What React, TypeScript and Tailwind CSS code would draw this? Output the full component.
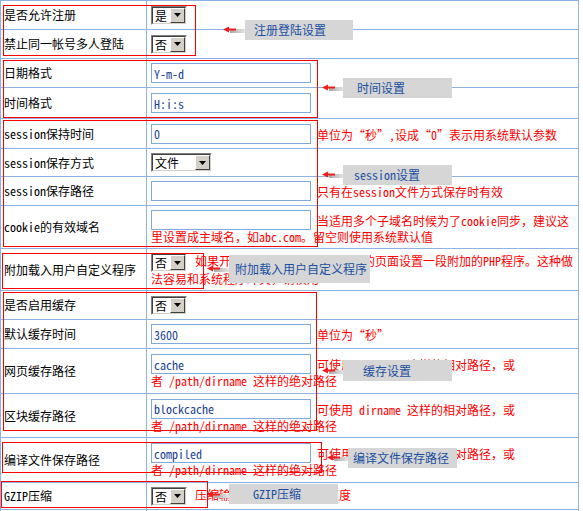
import React from 'react';

// 宋体-like metrics: CJK 12px, latin 6px
const font = "font-[family-name:'Noto_Sans_Mono_CJK_SC','Noto_Sans_CJK_SC',sans-serif]";

const Combo: React.FC<{ text: string; wide?: boolean }> = ({ text, wide }) => (
  <span
    className={`mr-[2px] inline-flex h-[19px] align-middle border border-t-[#808080] border-l-[#808080] border-r-[#ffffff] border-b-[#ffffff] ${
      wide ? 'w-[61px]' : 'w-[36px]'
    }`}
  >
    <span className="flex flex-1 border border-t-[#404040] border-l-[#404040] border-r-[#d4d0c8] border-b-[#d4d0c8] bg-white">
      <span className="flex-1 pl-[2px] leading-[15px] text-black">{text}</span>
      <span className="flex w-[15px] items-center justify-center border border-t-[#ffffff] border-l-[#ffffff] border-r-[#404040] border-b-[#404040] bg-[#d4d0c8]">
        <svg width="7" height="4" viewBox="0 0 7 4">
          <path d="M0 0h7L3.5 4z" fill="#000" />
        </svg>
      </span>
    </span>
  </span>
);

const Field: React.FC<{ value?: string }> = ({ value = '' }) => (
  <input
    readOnly
    value={value}
    className="h-[20px] w-[160px] border border-[#82a9db] bg-white px-[2px] align-baseline text-[#1c3f94] outline-none"
  />
);

const Note: React.FC<{ children: React.ReactNode }> = ({ children }) => (
  <span className="text-[#ff0000]">{children}</span>
);

const pathNote = (
  <Note>
    可使用 dirname 这样的相对路径，或<span className="whitespace-nowrap">者 /path/dirname</span> 这样的绝对路径
  </Note>
);

const rows: { label: string; h: string; value: React.ReactNode }[] = [
  { label: '是否允许注册', h: 'h-[29px]', value: <Combo text="是" /> },
  { label: '禁止同一帐号多人登陆', h: 'h-[29px]', value: <Combo text="否" /> },
  { label: '日期格式', h: 'h-[29px]', value: <Field value="Y-m-d" /> },
  { label: '时间格式', h: 'h-[31px]', value: <Field value="H:i:s" /> },
  {
    label: 'session保持时间',
    h: 'h-[30px]',
    value: (
      <>
        <Field value="0" /> <Note>单位为“秒”,设成“0”表示用系统默认参数</Note>
      </>
    ),
  },
  { label: 'session保存方式', h: 'h-[28px]', value: <Combo text="文件" wide /> },
  {
    label: 'session保存路径',
    h: 'h-[29px]',
    value: (
      <>
        <Field /> <Note>只有在session文件方式保存时有效</Note>
      </>
    ),
  },
  {
    label: 'cookie的有效域名',
    h: 'h-[43px]',
    value: (
      <>
        <Field /> <Note>当适用多个子域名时候为了cookie同步，建议这里设置成主域名，如abc.com。留空则使用系统默认值</Note>
      </>
    ),
  },
  {
    label: '附加载入用户自定义程序',
    h: 'h-[42px]',
    value: (
      <>
        <Combo text="否" /> <Note>如果开启此功能，您可以在所有的页面设置一段附加的PHP程序。这种做法容易和系统程序冲突，请慎用</Note>
      </>
    ),
  },
  { label: '是否启用缓存', h: 'h-[29px]', value: <Combo text="否" /> },
  {
    label: '默认缓存时间',
    h: 'h-[29px]',
    value: (
      <>
        <Field value="3600" /> <Note>单位为“秒”</Note>
      </>
    ),
  },
  {
    label: '网页缓存路径',
    h: 'h-[45px]',
    value: (
      <>
        <Field value="cache" /> {pathNote}
      </>
    ),
  },
  {
    label: '区块缓存路径',
    h: 'h-[44px]',
    value: (
      <>
        <Field value="blockcache" /> {pathNote}
      </>
    ),
  },
  {
    label: '编译文件保存路径',
    h: 'h-[45px]',
    value: (
      <>
        <Field value="compiled" /> {pathNote}
      </>
    ),
  },
  {
    label: 'GZIP压缩',
    h: 'h-[27px]',
    value: (
      <>
        <Combo text="否" /> <Note>压缩输出可提高页面加载速度</Note>
      </>
    ),
  },
  { label: '', h: 'h-[10px]', value: null },
];

// annotation overlays
const redBoxes = [
  'left-[3px] top-[5px] w-[193px] h-[51px]',
  'left-[3px] top-[60px] w-[315px] h-[58px]',
  'left-[3px] top-[120px] w-[315px] h-[127px]',
  'left-[2px] top-[253px] w-[202px] h-[36px]',
  'left-[3px] top-[292px] w-[314px] h-[139px]',
  'left-[2px] top-[442px] w-[320px] h-[31px]',
  'left-[1px] top-[481px] w-[207px] h-[27px]',
];

const tags = [
  { text: '注册登陆设置', cls: 'left-[245px] top-[20px] w-[108px] h-[20px] pl-[9px]' },
  { text: '时间设置', cls: 'left-[343px] top-[78px] w-[109px] h-[20px] pl-[14px]' },
  { text: 'session设置', cls: 'left-[343px] top-[165px] w-[109px] h-[20px] pl-[11px]' },
  { text: '附加载入用户自定义程序', cls: 'left-[229px] top-[255px] w-[141px] h-[28px] pl-[6px]' },
  { text: '缓存设置', cls: 'left-[343px] top-[360px] w-[109px] h-[21px] pl-[20px]' },
  { text: '编译文件保存路径', cls: 'left-[348px] top-[448px] w-[109px] h-[20px] pl-[5px]' },
  { text: 'GZIP压缩', cls: 'left-[229px] top-[484px] w-[109px] h-[20px] pl-[24px]' },
];

const arrows = [
  'left-[223px] top-[26px]',
  'left-[322px] top-[84px]',
  'left-[322px] top-[171px]',
  'left-[207px] top-[265px]',
  'left-[322px] top-[367px]',
  'left-[327px] top-[454px]',
  'left-[207px] top-[491px]',
];

const Arrow: React.FC<{ cls: string }> = ({ cls }) => (
  <svg className={`absolute ${cls}`} width="22" height="8" viewBox="0 0 22 8">
    <defs>
      <linearGradient id="arrowShade" x1="0" x2="1" y1="0" y2="0">
        <stop offset="0" stopColor="#a8a8a8" />
        <stop offset="1" stopColor="#e6e6e6" />
      </linearGradient>
    </defs>
    <rect x="7" y="3" width="15" height="4" fill="url(#arrowShade)" />
    <path d="M3 3.5H13" stroke="#ee1c1c" strokeWidth="2" />
    <path d="M0 3.5L6 0.5V6.5Z" fill="#ee1c1c" />
  </svg>
);

export default function App() {
  return (
    <div className={`relative h-[511px] w-[583px] overflow-hidden bg-white text-[12px] leading-[14px] text-black ${font}`}>
      <div className="w-[579px] border-x border-[#8db3e2]">
        {rows.map((r, i) => (
          <div key={i} className={`flex border-t border-[#8db3e2] ${r.h}`}>
            <div className="flex w-[145px] items-center pl-[3px]">{r.label}</div>
            <div className="flex flex-1 items-center border-l border-[#8db3e2] pl-[4px]">
              <div className="w-full">{r.value}</div>
            </div>
          </div>
        ))}
      </div>

      {redBoxes.map((c, i) => (
        <div key={i} className={`absolute border border-[#ff0000] ${c}`} />
      ))}
      {arrows.map((c, i) => (
        <Arrow key={i} cls={c} />
      ))}
      {tags.map((t, i) => (
        <div key={i} className={`absolute flex items-center bg-[#d6d6d6] text-[#1b4f9f] ${t.cls}`}>
          {t.text}
        </div>
      ))}
    </div>
  );
}
